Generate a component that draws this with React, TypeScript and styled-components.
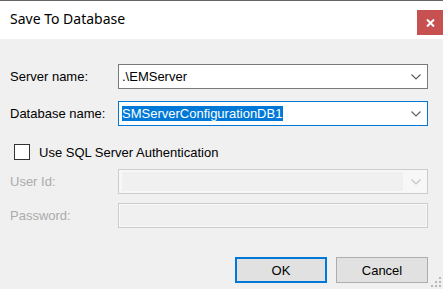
import React from "react";
import styled, { createGlobalStyle } from "styled-components";

const GlobalStyle = createGlobalStyle`
  html, body {
    margin: 0;
    padding: 0;
    background: #f0f0f0;
  }
`;

const Window = styled.div`
  position: relative;
  width: 443px;
  height: 289px;
  box-sizing: border-box;
  border-top: 1px solid #646464;
  background: #f0f0f0;
  display: flex;
  flex-direction: column;
  font-family: "Liberation Sans", Arial, sans-serif;
  font-size: 13px;
  color: #000;
  overflow: hidden;
`;

const TitleBar = styled.div`
  height: 38px;
  background: #fff;
  display: flex;
  justify-content: space-between;
  align-items: flex-start;
  flex-shrink: 0;
`;

const Title = styled.div`
  font-family: "Noto Sans", "Segoe UI", sans-serif;
  font-size: 14px;
  line-height: 38px;
  padding-left: 10px;
  margin-top: -1px;
  color: #000;
`;

const CloseButton = styled.div`
  width: 26px;
  height: 25px;
  margin-top: 9px;
  background: #c75050;
  display: flex;
  align-items: center;
  justify-content: center;
`;

const Body = styled.div`
  flex: 1;
  display: flex;
  flex-direction: column;
  padding: 25px 15px 0 10px;
`;

const Row = styled.div<{ $top?: number }>`
  display: grid;
  grid-template-columns: 108px 310px;
  align-items: center;
  margin-top: ${({ $top }) => $top ?? 0}px;
`;

const Label = styled.label<{ $disabled?: boolean }>`
  color: ${({ $disabled }) => ($disabled ? "#ababab" : "#000")};
  white-space: nowrap;
`;

const Combo = styled.div<{ $focused?: boolean; $disabled?: boolean }>`
  height: 25px;
  box-sizing: border-box;
  border: 1px solid
    ${({ $focused, $disabled }) =>
      $disabled ? "#cccccc" : $focused ? "#0078d7" : "#7a7a7a"};
  background: ${({ $disabled }) => ($disabled ? "#f7f7f7" : "#fff")};
  display: flex;
  align-items: center;
  padding: 0 6px 0 2px;
  gap: 8px;
`;

const ComboText = styled.div`
  flex: 1;
  padding-left: 1px;
  white-space: nowrap;
  line-height: 14px;
`;

const DisabledEdit = styled.div`
  flex: 1;
  align-self: stretch;
  margin: 2px 0 2px 1px;
  background: #f0f0f0;
`;

const Selected = styled.span`
  background: #0078d7;
  color: #fff;
  padding: 0 1px 0 0;
`;

const TextBox = styled.div`
  height: 25px;
  box-sizing: border-box;
  border: 1px solid #cccccc;
  box-shadow: inset 0 0 0 1px #f9f9f9;
  background: #f0f0f0;
`;

const CheckRow = styled.label`
  display: flex;
  align-items: center;
  gap: 9px;
  padding-left: 4px;
  height: 16px;
  margin-top: 18px;
`;

const CheckBox = styled.span`
  width: 16px;
  height: 16px;
  box-sizing: border-box;
  border: 1px solid #333;
  background: #fff;
  flex-shrink: 0;
`;

const ButtonRow = styled.div`
  display: flex;
  justify-content: flex-end;
  gap: 9px;
  margin-top: 29px;
`;

const Button = styled.button<{ $default?: boolean }>`
  width: 92px;
  height: 26px;
  box-sizing: border-box;
  background: #e1e1e1;
  border: ${({ $default }) =>
    $default ? "2px solid #0078d7" : "1px solid #adadad"};
  font-family: "Liberation Sans", Arial, sans-serif;
  font-size: 13px;
  color: #000;
  padding: 0;
`;

const Grip = styled.svg`
  position: absolute;
  right: 2px;
  bottom: 2px;
`;

const Chevron: React.FC<{ disabled?: boolean }> = ({ disabled }) => (
  <svg width="10" height="6" viewBox="0 0 10 6">
    <polyline
      points="0.5,0.5 5,5 9.5,0.5"
      fill="none"
      stroke={disabled ? "#c4c4c4" : "#606060"}
      strokeWidth="1.2"
    />
  </svg>
);

const App: React.FC = () => (
  <>
    <GlobalStyle />
    <Window>
      <TitleBar>
        <Title>Save To Database</Title>
        <CloseButton>
          <svg width="9" height="8" viewBox="0 0 9 8">
            <path d="M1 0.5 L8 7.5 M8 0.5 L1 7.5" stroke="#fff" strokeWidth="2" />
          </svg>
        </CloseButton>
      </TitleBar>
      <Body>
        <Row>
          <Label>Server name:</Label>
          <Combo>
            <ComboText>.\EMServer</ComboText>
            <Chevron />
          </Combo>
        </Row>
        <Row $top={12}>
          <Label>Database name:</Label>
          <Combo $focused>
            <ComboText>
              <Selected>SMServerConfigurationDB1</Selected>
            </ComboText>
            <Chevron />
          </Combo>
        </Row>
        <CheckRow>
          <CheckBox />
          Use SQL Server Authentication
        </CheckRow>
        <Row $top={9}>
          <Label $disabled>User Id:</Label>
          <Combo $disabled>
            <DisabledEdit />
            <Chevron disabled />
          </Combo>
        </Row>
        <Row $top={9}>
          <Label $disabled>Password:</Label>
          <TextBox />
        </Row>
        <ButtonRow>
          <Button $default>OK</Button>
          <Button>Cancel</Button>
        </ButtonRow>
      </Body>
      <Grip width="10" height="10" viewBox="0 0 10 10">
        <g fill="#b8b8b8">
          <rect x="8" y="0" width="2" height="2" />
          <rect x="4" y="4" width="2" height="2" />
          <rect x="8" y="4" width="2" height="2" />
          <rect x="0" y="8" width="2" height="2" />
          <rect x="4" y="8" width="2" height="2" />
          <rect x="8" y="8" width="2" height="2" />
        </g>
      </Grip>
    </Window>
  </>
);

export default App;
